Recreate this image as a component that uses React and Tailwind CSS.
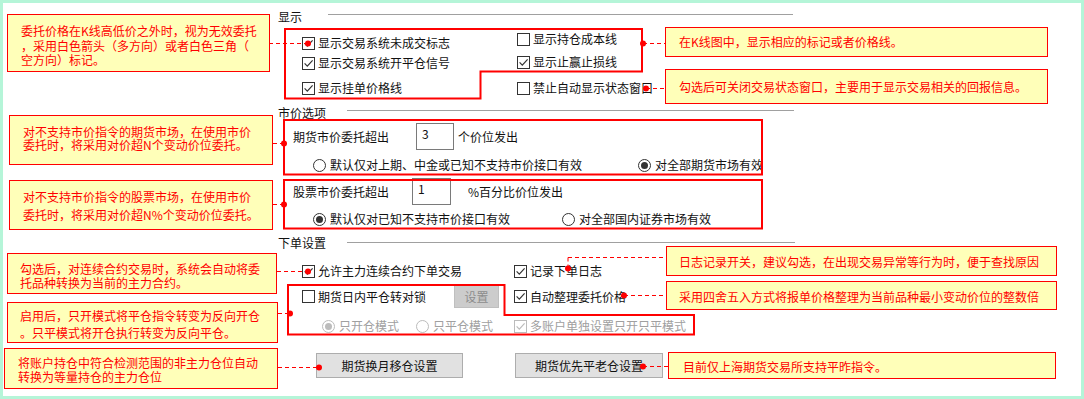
import React from 'react';

// 勾选框
const Check = ({ checked, disabled }) => (
  <span
    className={`w-[13px] h-[13px] shrink-0 border bg-white flex items-center justify-center ${
      disabled ? 'border-[#bcbcbc]' : 'border-[#333333]'
    }`}
  >
    {checked && (
      <svg width="11" height="11" viewBox="0 0 11 11">
        <path
          d="M1.6 5.4 L4.3 8.1 L9.6 2.4"
          fill="none"
          stroke={disabled ? '#bcbcbc' : '#333333'}
          strokeWidth="1.2"
        />
      </svg>
    )}
  </span>
);

const Radio = ({ checked, disabled }) => (
  <span
    className={`w-[13px] h-[13px] shrink-0 rounded-full border bg-white flex items-center justify-center ${
      disabled ? 'border-[#bcbcbc]' : 'border-[#333333]'
    }`}
  >
    {checked && (
      <span className={`w-[7px] h-[7px] rounded-full ${disabled ? 'bg-[#bcbcbc]' : 'bg-[#333333]'}`} />
    )}
  </span>
);

const CheckItem = ({ checked, disabled, children }) => (
  <div className={`flex items-center gap-[3px] h-4 whitespace-nowrap ${disabled ? 'text-[#a0a0a0]' : ''}`}>
    <Check checked={checked} disabled={disabled} />
    <span>{children}</span>
  </div>
);

const RadioItem = ({ checked, disabled, children }) => (
  <div className={`flex items-center gap-[4px] h-4 whitespace-nowrap ${disabled ? 'text-[#a0a0a0]' : ''}`}>
    <Radio checked={checked} disabled={disabled} />
    <span>{children}</span>
  </div>
);

const Header = ({ label, lineClass }) => (
  <div className="flex items-start h-4">
    <span className="leading-4 whitespace-nowrap">{label}</span>
    <div className={`h-px bg-[#a0a0a0] ${lineClass}`} />
  </div>
);

// 注释框
const Callout = ({ className, lines }) => (
  <div className={`absolute border border-[#ff0000] bg-[#ffffb9] text-[#ff0000] text-[12px] ${className}`}>
    {lines.map((l, i) => (
      <div key={i} className="whitespace-nowrap">
        {l}
      </div>
    ))}
  </div>
);

const dashes = [
  [269, 43, 308, 43],
  [643, 43, 665, 43],
  [646, 88, 665, 88],
  [273, 143, 284, 143],
  [273, 204, 284, 204],
  [277, 271, 308, 271],
  [278, 313, 290, 313],
  [278, 367, 319, 367],
  [568, 268, 568, 257],
  [568, 257, 666, 257],
  [624, 295, 666, 295],
  [643, 366, 668, 366],
];

const dots = [
  [308, 43],
  [643, 43],
  [646, 88],
  [284, 143],
  [284, 204],
  [308, 271],
  [290, 313],
  [319, 367],
  [568, 268],
  [624, 295],
  [643, 366],
];

export default function App() {
  return (
    <div className="relative w-[1084px] h-[399px] bg-white overflow-hidden font-['Noto_Sans_CJK_SC','Microsoft_YaHei',sans-serif] text-[12px] text-[#111111]">
      {/* 设置面板 */}
      <div className="pl-[278px] pt-[9px] leading-4">
        <Header label="显示" lineClass="ml-[26px] mt-[5px] w-[465px]" />
        <div className="flex ml-[24px]">
          <div className="w-[215px] flex flex-col pt-[10px]">
            <CheckItem checked>显示交易系统未成交标志</CheckItem>
            <div className="mt-[4px]">
              <CheckItem checked>显示交易系统开平仓信号</CheckItem>
            </div>
            <div className="mt-[9px]">
              <CheckItem checked>显示挂单价格线</CheckItem>
            </div>
          </div>
          <div className="flex flex-col pt-[6px]">
            <CheckItem>显示持仓成本线</CheckItem>
            <div className="mt-[7px]">
              <CheckItem checked>显示止赢止损线</CheckItem>
            </div>
            <div className="mt-[10px]">
              <CheckItem>禁止自动显示状态窗口</CheckItem>
            </div>
          </div>
        </div>

        <div className="mt-[9px]">
          <Header label="市价选项" lineClass="ml-[21px] mt-[5px] w-[447px]" />
        </div>
        <div className="mt-[2px] pl-[15px] flex items-center h-[27px]">
          <span className="whitespace-nowrap">期货市价委托超出</span>
          <div className="ml-[27px] w-[38px] h-[27px] border border-[#7a7a7a] bg-white pl-[5px] pt-[3px] leading-[14px]">3</div>
          <span className="ml-[4px] whitespace-nowrap">个价位发出</span>
        </div>
        <div className="mt-[7px] pl-[35px] flex">
          <div className="w-[325px]">
            <RadioItem>默认仅对上期、中金或已知不支持市价接口有效</RadioItem>
          </div>
          <RadioItem checked>对全部期货市场有效</RadioItem>
        </div>
        <div className="mt-[5px] pl-[15px] flex items-center h-[27px]">
          <span className="whitespace-nowrap">股票市价委托超出</span>
          <div className="ml-[23px] w-[39px] h-[27px] border border-[#7a7a7a] bg-white pl-[5px] pt-[3px] leading-[14px]">1</div>
          <span className="ml-[17px] whitespace-nowrap">%百分比价位发出</span>
        </div>
        <div className="mt-[6px] pl-[35px] flex">
          <div className="w-[249px]">
            <RadioItem checked>默认仅对已知不支持市价接口有效</RadioItem>
          </div>
          <RadioItem>对全部国内证券市场有效</RadioItem>
        </div>

        <div className="mt-[8px]">
          <Header label="下单设置" lineClass="ml-[21px] mt-[7px] w-[448px]" />
        </div>
        <div className="mt-[12px] pl-[24px] flex">
          <div className="w-[212px]">
            <CheckItem checked>允许主力连续合约下单交易</CheckItem>
          </div>
          <CheckItem checked>记录下单日志</CheckItem>
        </div>
        <div className="mt-[6px] pl-[24px] flex items-center h-[23px]">
          <div className="w-[212px] flex items-center">
            <div className="w-[152px]">
              <CheckItem>期货日内平仓转对锁</CheckItem>
            </div>
            <div className="w-[45px] h-[23px] border border-[#bfbfbf] bg-[#cccccc] text-[#8c8c8c] flex items-center justify-center">
              设置
            </div>
          </div>
          <CheckItem checked>自动整理委托价格</CheckItem>
        </div>
        <div className="mt-[10px] pl-[44px] flex">
          <div className="w-[94px]">
            <RadioItem checked disabled>只开仓模式</RadioItem>
          </div>
          <div className="w-[98px]">
            <RadioItem disabled>只平仓模式</RadioItem>
          </div>
          <CheckItem checked disabled>多账户单独设置只开只平模式</CheckItem>
        </div>
        <div className="mt-[19px] pl-[38px] flex gap-[52px]">
          <div className="w-[147px] h-[25px] border border-[#adadad] bg-[#e1e1e1] flex items-center justify-center">
            期货换月移仓设置
          </div>
          <div className="w-[148px] h-[25px] border border-[#adadad] bg-[#e1e1e1] flex items-center justify-center">
            期货优先平老仓设置
          </div>
        </div>
      </div>

      {/* 红色标注框、虚线与圆点 */}
      <svg className="absolute inset-0 pointer-events-none" width="1084" height="399">
        <polygon
          points="285,29 642,29 642,71.5 480.5,71.5 480.5,98.5 285,98.5"
          fill="none"
          stroke="#ff0000"
          strokeWidth="2"
        />
        <rect x="284" y="120" width="478" height="54.5" fill="none" stroke="#ff0000" strokeWidth="2" />
        <rect x="284" y="180" width="478" height="48.5" fill="none" stroke="#ff0000" strokeWidth="2" />
        <polygon
          points="288,285 504.5,285 504.5,315 694,315 694,334.5 288,334.5"
          fill="none"
          stroke="#ff0000"
          strokeWidth="2"
        />
        {dashes.map(([x1, y1, x2, y2], i) => (
          <line
            key={i}
            x1={x1}
            y1={y1 + 0.5}
            x2={x2}
            y2={y2 + 0.5}
            stroke="#ff0000"
            strokeWidth="1"
            strokeDasharray="4 3"
          />
        ))}
        {dots.map(([cx, cy], i) => (
          <circle key={i} cx={cx} cy={cy + 0.5} r="3" fill="#ff0000" />
        ))}
      </svg>

      {/* 注释 */}
      <Callout
        className="left-[7px] top-[14px] w-[263px] h-[58px] pl-[13px] pt-[9px] leading-[14.5px]"
        lines={['委托价格在K线高低价之外时，视为无效委托', '，采用白色箭头（多方向）或者白色三角（', '空方向）标记。']}
      />
      <Callout
        className="left-[665px] top-[27px] w-[383px] h-[30px] pl-[13px] leading-[28px]"
        lines={['在K线图中，显示相应的标记或者价格线。']}
      />
      <Callout
        className="left-[665px] top-[69px] w-[383px] h-[35px] pl-[13px] leading-[34px]"
        lines={['勾选后可关闭交易状态窗口，主要用于显示交易相关的回报信息。']}
      />
      <Callout
        className="left-[9px] top-[115px] w-[264px] h-[50px] pl-[13px] pt-[10px] leading-[12.5px]"
        lines={['对不支持市价指令的期货市场，在使用市价', '委托时，将采用对价超N个变动价位委托。']}
      />
      <Callout
        className="left-[9px] top-[180px] w-[264px] h-[50px] pl-[13px] pt-[7px] leading-[18px]"
        lines={['对不支持市价指令的股票市场，在使用市价', '委托时，将采用对价超N%个变动价位委托。']}
      />
      <Callout
        className="left-[7px] top-[253px] w-[270px] h-[41px] pl-[12px] pt-[8px] leading-[14px]"
        lines={['勾选后，对连续合约交易时，系统会自动将委', '托品种转换为当前的主力合约。']}
      />
      <Callout
        className="left-[7px] top-[302px] w-[271px] h-[41px] pl-[12px] pt-[4px] leading-[17px]"
        lines={['启用后，只开模式将平仓指令转变为反向开仓', '。只平模式将开仓执行转变为反向平仓。']}
      />
      <Callout
        className="left-[4px] top-[348px] w-[274px] h-[41px] pl-[13px] pt-[7px] leading-[14px]"
        lines={['将账户持仓中符合检测范围的非主力仓位自动', '转换为等量持仓的主力仓位']}
      />
      <Callout
        className="left-[666px] top-[246px] w-[391px] h-[30px] pl-[12px] leading-[29px]"
        lines={['日志记录开关，建议勾选，在出现交易异常等行为时，便于查找原因']}
      />
      <Callout
        className="left-[666px] top-[281px] w-[391px] h-[29px] pl-[12px] leading-[29px]"
        lines={['采用四舍五入方式将报单价格整理为当前品种最小变动价位的整数倍']}
      />
      <Callout
        className="left-[668px] top-[352px] w-[388px] h-[27px] pl-[14px] leading-[27px]"
        lines={['目前仅上海期货交易所支持平昨指令。']}
      />

      {/* 外框 */}
      <div className="absolute inset-0 border-[3px] border-[#b5f5d8] pointer-events-none" />
    </div>
  );
}
